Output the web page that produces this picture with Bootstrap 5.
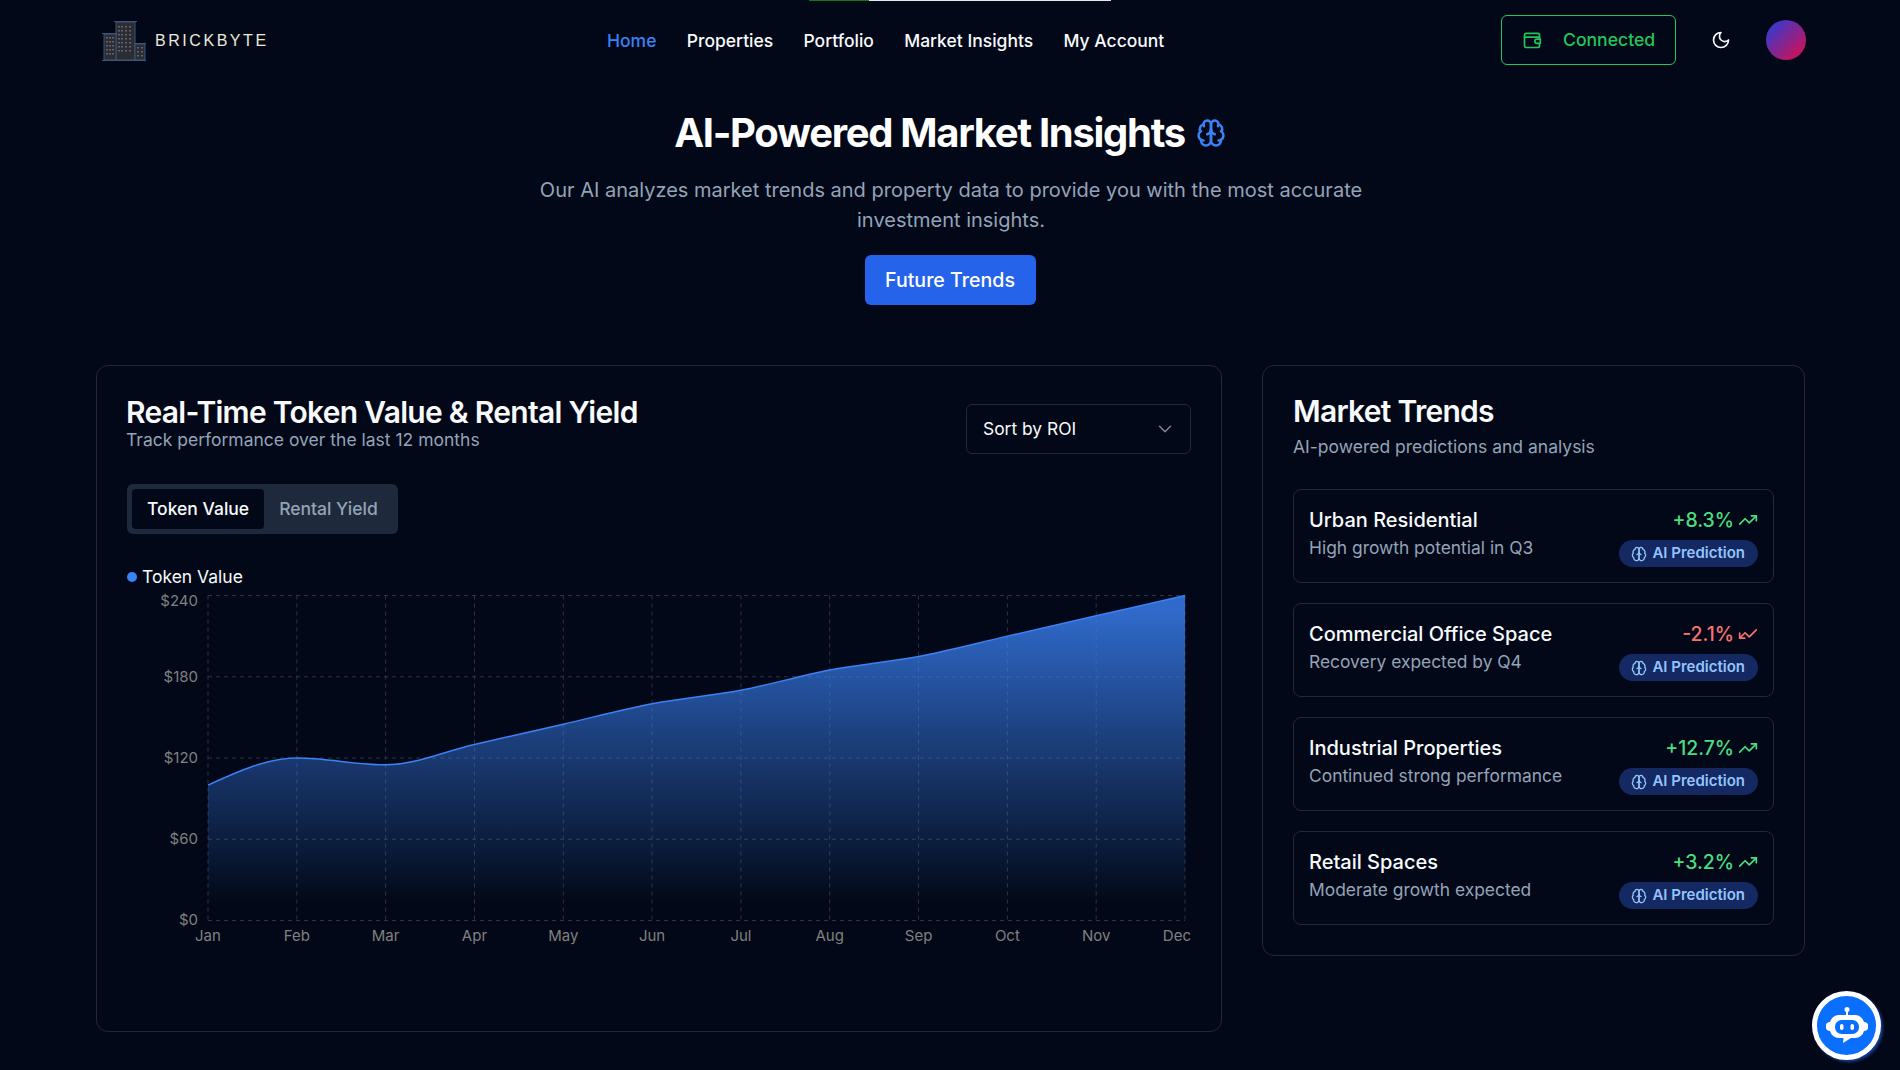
<!doctype html>
<html lang="en"><head><meta charset="utf-8"><title>BrickByte</title>
<link href="https://cdn.jsdelivr.net/npm/bootstrap@5.3.0/dist/css/bootstrap.min.css" rel="stylesheet">
<style>
body{background:#020817;color:#f8fafc;font-family:Inter,"Liberation Sans",sans-serif;min-height:1070px;overflow:hidden}
.topbar{height:1px;display:flex;justify-content:center;padding-left:19px}
.tb-g{width:60px;background:#0a7d12}.tb-w{width:242px;background:#e5e7eb}
.shell{padding:0 94px 0 96px}
.hdr{height:78px;display:flex;align-items:center}
.brand{display:flex;align-items:center;gap:9px;width:511px;padding-left:6px;margin-top:2px}
.brandname{font-family:"Liberation Sans",sans-serif;font-size:16px;letter-spacing:2.55px;color:#ece9dc}
.mainnav{gap:30.3px;margin-top:3px}
.mainnav a{color:#f8fafc;font-weight:500;font-size:17.5px;text-decoration:none}
.mainnav a.on{color:#3b82f6}
.rightbox{display:flex;align-items:center;margin-left:auto}
.conn{display:flex;align-items:center;gap:21px;height:50px;width:175px;padding-left:20px;border:1px solid #22c55e;border-radius:6px;color:#22c55e;font-weight:500;font-size:17.6px;background:transparent}
.moon{margin:0 35px 0 35px;line-height:0}
.avatar{width:40px;height:40px;border-radius:50%;background:linear-gradient(135deg,#1e40e0,#e60b45)}
.hero{text-align:center;padding-top:27px}
.hero h1{font-size:40px;font-weight:700;line-height:54px;margin:0 0 15px;letter-spacing:-1.3px;color:#fff;display:flex;justify-content:center;align-items:center;gap:11px;padding-right:2px}
.hero p{font-size:20px;line-height:30px;color:#94a3b8;width:850px;margin:0 auto 20px}
.cta{background:#2563eb;border:0;color:#fff;font-size:19.6px;font-weight:500;height:50px;width:171px;border-radius:6px;padding:1px 0 0;margin-right:2px}
.cta:hover{background:#2563eb;color:#fff}
.split{display:flex;gap:40px;margin-top:60px;align-items:flex-start}
.panel{background:#020817;border:1px solid #1e293b;border-radius:12px}
.leftp{width:1126px;height:667px;padding:30px 30px 0 29px}
.rightp{width:543px;height:591px;padding:30px}
.ttl{font-size:30px;font-weight:600;line-height:36px;letter-spacing:-.72px;margin:-2px 0 0;color:#f8fafc}
.rightp .ttl{margin-top:-3px}
.sub{color:#94a3b8;font-size:17.5px;line-height:24px;margin-top:-2px}
.sub2{color:#94a3b8;font-size:17.5px;line-height:24px;margin-top:6px}
.pick{width:225px;height:50px;margin-top:8px;background:#020817;border:1px solid #1e293b;border-radius:6px;color:#f8fafc;font-size:17.4px;padding:0 14px 0 16px;display:flex;align-items:center;justify-content:space-between}
.tabsbox{display:inline-flex;background:#1e293b;border-radius:6px;padding:5px;height:50px;margin:30px 0 0 1px}
.tabx{padding:0 15px;display:flex;align-items:center;font-size:17.5px;font-weight:500;color:#94a3b8;border-radius:4px}
.tabx.on{background:#020817;color:#f8fafc}
.legend{display:flex;align-items:center;gap:5px;font-size:17.5px;color:#f8fafc;line-height:24px;margin:31px 0 0 1px;height:24px}
.ldot{width:10px;height:10px;border-radius:50%;background:#3b82f6;margin-top:-1px}
.chartsvg{display:block;margin:-4px 0 0 -29px}
.chartsvg text{font-family:Inter,"Liberation Sans",sans-serif;font-size:15px;fill:#808080}
.rows{display:flex;flex-direction:column;gap:20px;margin-top:30px}
.trow{height:94px;border:1px solid #1e293b;border-radius:8px;padding:17px 16px 15px 15px;display:flex;justify-content:space-between}
.rname{font-size:20px;font-weight:500;line-height:28px;margin-top:-1px}
.rdesc{font-size:17.4px;line-height:24px;color:#94a3b8;margin-top:2px}
.rval{display:flex;align-items:center;justify-content:flex-end;gap:4px;font-size:19.4px;font-weight:500;line-height:28px;margin:-1px -1px 0 0}
.up{color:#4ade80}.down{color:#f87171}
.aitag{display:inline-flex;align-items:center;gap:5px;height:27px;padding:0 13px 0 12px;margin:6px -1px 0 0;border-radius:14px;color:#93c5fd;font-size:15px;font-weight:600;background:rgba(30,58,138,.65)}
.botbtn{position:absolute;right:19px;bottom:10px;width:69px;height:69px;border-radius:50%;background:#0b6ffd;border:5px solid #fff;display:flex;align-items:center;justify-content:center;box-shadow:2px 2px 3px rgba(37,99,235,.6)}
</style></head>
<body>
<div class="topbar"><div class="tb-g"></div><div class="tb-w"></div></div>
<div class="shell">
<header class="hdr">
 <div class="brand">
  <svg width="44" height="40" viewBox="0 0 44 40" fill="#2b2d33" stroke="#3d5578" stroke-width="1"><rect x="14" y="1" width="19" height="38"/><rect x="2" y="13" width="12" height="26"/><rect x="33" y="23" width="10" height="16"/><path d="M12 .5h23M0 12.5h15M32 22.500h12M0 39.500h44" fill="none"/><path d="M17 5v26M20 5v26M24 5v26M28 5v26M5 16v20M8 16v20M11 16v20M36 26v10M40 26v10" stroke="#778" stroke-width="1.500" stroke-dasharray="1.500 2.500" fill="none"/></svg>
  <span class="brandname">BRICKBYTE</span>
 </div>
 <nav class="d-flex mainnav">
  <a class="on" href="#">Home</a><a href="#">Properties</a><a href="#">Portfolio</a><a href="#">Market Insights</a><a href="#">My Account</a>
 </nav>
 <div class="rightbox">
  <button class="conn"><svg width="20" height="20" viewBox="0 0 24 24" fill="none" stroke="currentColor" stroke-width="2" stroke-linecap="round" stroke-linejoin="round"><path d="M21 11V6a2 2 0 0 0-2-2H5a2 2 0 0 0-2 2v13a2 2 0 0 0 2 2h14a2 2 0 0 0 2-2v-3"/><path d="M3 8.500h18"/><path d="M22 11h-4a2.500 2.500 0 0 0 0 5h4Z"/></svg><span>Connected</span></button>
  <span class="moon"><svg width="20" height="20" viewBox="0 0 24 24" fill="none" stroke="#f8fafc" stroke-width="2" stroke-linecap="round" stroke-linejoin="round"><path d="M12 3a6 6 0 0 0 9 9 9 9 0 1 1-9-9Z"/></svg></span>
  <span class="avatar"></span>
 </div>
</header>
<section class="hero">
 <h1>AI-Powered Market Insights <svg width="30" height="30" viewBox="0 0 24 24" fill="none" stroke="#3b82f6" stroke-width="2" stroke-linecap="round" stroke-linejoin="round"><path d="M12 5a3 3 0 1 0-5.997.125 4 4 0 0 0-2.526 5.770 4 4 0 0 0 .556 6.588A4 4 0 1 0 12 18Z"/><path d="M12 5a3 3 0 1 1 5.997.125 4 4 0 0 1 2.526 5.770 4 4 0 0 1-.556 6.588A4 4 0 1 1 12 18Z"/><path d="M15 13a4.500 4.500 0 0 1-3-4 4.500 4.500 0 0 1-3 4"/><path d="M17.599 6.500a3 3 0 0 0 .399-1.375"/><path d="M6.003 5.125A3 3 0 0 0 6.401 6.500"/><path d="M3.477 10.896a4 4 0 0 1 .585-.396"/><path d="M19.938 10.500a4 4 0 0 1 .585.396"/><path d="M6 18a4 4 0 0 1-1.967-.516"/><path d="M19.967 17.484A4 4 0 0 1 18 18"/></svg></h1>
 <p>Our AI analyzes market trends and property data to provide you with the most accurate investment insights.</p>
 <button class="btn cta">Future Trends</button>
</section>
<section class="split">
 <div class="panel leftp">
  <div class="d-flex justify-content-between">
   <div><h2 class="ttl">Real-Time Token Value &amp; Rental Yield</h2><div class="sub">Track performance over the last 12 months</div></div>
   <div class="pick"><span>Sort by ROI</span><svg width="22" height="22" viewBox="0 0 24 24" fill="none" stroke="#808590" stroke-width="1.600" stroke-linecap="round" stroke-linejoin="round"><path d="m6 9 6 6 6-6"/></svg></div>
  </div>
  <div class="tabsbox"><div class="tabx on">Token Value</div><div class="tabx">Rental Yield</div></div>
  <div class="legend"><span class="ldot"></span>Token Value</div>
  <svg id="chart" class="chartsvg" width="1124" height="370" viewBox="97 584.500 1124 370" xmlns="http://www.w3.org/2000/svg"></svg>
 </div>
 <div class="panel rightp">
  <h2 class="ttl">Market Trends</h2>
  <div class="sub2">AI-powered predictions and analysis</div>
  <div class="rows" id="rows"></div>
 </div>
</section>
</div>
<div class="botbtn"><svg width="42" height="40" viewBox="0 0 42 40"><circle cx="21" cy="3.500" r="2.500" fill="#fff"/><path d="M21 5v5" stroke="#fff" stroke-width="2"/><path d="M13 9h16a9 9 0 0 1 9 7 4 4 0 0 1 0 9 9 9 0 0 1-9 7h-4l-8 5 .5-5H13a9 9 0 0 1-9-7 4 4 0 0 1 0-9 9 9 0 0 1 9-7Z" fill="#fff"/><rect x="9" y="14" width="24" height="14" rx="6.500" fill="#0b6ffd"/><rect x="14" y="18" width="3.500" height="6" rx="1.700" fill="#fff"/><rect x="24.500" y="18" width="3.500" height="6" rx="1.700" fill="#fff"/></svg></div>
<script>
var vals=[100,120,115,130,145,160,170,185,195,210,225,240],mon=['Jan','Feb','Mar','Apr','May','Jun','Jul','Aug','Sep','Oct','Nov','Dec'];
var X=function(i){return 208+i*88.82},Y=function(v){return 920-v*325/240};
var px=vals.map(function(v,i){return [X(i),Y(v)]});
function monotone(p){var n=p.length,h=[],s=[],t=[],i;for(i=0;i<n-1;i++){h[i]=p[i+1][0]-p[i][0];s[i]=(p[i+1][1]-p[i][1])/h[i]}
 for(i=1;i<n-1;i++){var a=s[i-1],b=s[i];var q=(a*h[i]+b*h[i-1])/(h[i-1]+h[i]);t[i]=(Math.sign(a)+Math.sign(b))*Math.min(Math.abs(a),Math.abs(b),.5*Math.abs(q))||0}
 t[0]=(3*s[0]-t[1])/2;t[n-1]=(3*s[n-2]-t[n-2])/2;
 var d='M'+p[0][0]+','+p[0][1];for(i=0;i<n-1;i++){var k=h[i]/3;d+='C'+(p[i][0]+k)+','+(p[i][1]+k*t[i])+' '+(p[i+1][0]-k)+','+(p[i+1][1]-k*t[i+1])+' '+p[i+1][0]+','+p[i+1][1]}return d}
var line=monotone(px),o='<defs><linearGradient id="gr" x1="0" y1="0" x2="0" y2="1"><stop offset="5%" stop-color="#3b82f6" stop-opacity=".8"/><stop offset="95%" stop-color="#3b82f6" stop-opacity="0"/></linearGradient></defs>';
var g='';[0,60,120,180,240].forEach(function(v){g+='<line x1="208" x2="1185" y1="'+Y(v)+'" y2="'+Y(v)+'"/>'});
mon.forEach(function(m,i){g+='<line y1="595" y2="920" x1="'+X(i)+'" x2="'+X(i)+'"/>'});
o+='<g stroke="#2b3547" stroke-dasharray="4 4" fill="none">'+g+'</g>';
o+='<path d="'+line+'L1185,920L208,920Z" fill="url(#gr)"/><path d="'+line+'" fill="none" stroke="#3b82f6" stroke-width="1.500"/>';
[0,60,120,180,240].forEach(function(v){var dy=v==240?10:(v==0?4:5);o+='<text text-anchor="end" x="198" y="'+(Y(v)+dy)+'">$'+v+'</text>'});
mon.forEach(function(m,i){o+='<text text-anchor="'+(i==11?'end':'middle')+'" x="'+(i==11?1191:X(i))+'" y="940">'+m+'</text>'});
document.getElementById('chart').innerHTML=o;
var dn2='<path d="m22 7-8.500 8.500-5-5L2 17"/><path d="M8 17H2v-6"/>',up2='<path d="m2 17 6.500-6.500 5 5L22 7"/><path d="M16 7h6v6"/>';
var brain='<svg width="16" height="16" viewBox="0 0 24 24" fill="none" stroke="currentColor" stroke-width="2" stroke-linecap="round" stroke-linejoin="round"><path d="M12 5a3 3 0 1 0-5.997.125 4 4 0 0 0-2.526 5.770 4 4 0 0 0 .556 6.588A4 4 0 1 0 12 18Z"/><path d="M12 5a3 3 0 1 1 5.997.125 4 4 0 0 1 2.526 5.770 4 4 0 0 1-.556 6.588A4 4 0 1 1 12 18Z"/><path d="M15 13a4.500 4.500 0 0 1-3-4 4.500 4.500 0 0 1-3 4"/></svg>';
var rows=[['Urban Residential','High growth potential in Q3','+8.3%',1],['Commercial Office Space','Recovery expected by Q4','-2.1%',0],['Industrial Properties','Continued strong performance','+12.7%',1],['Retail Spaces','Moderate growth expected','+3.2%',1]];
document.getElementById('rows').innerHTML=rows.map(function(r){return '<div class="trow"><div><div class="rname">'+r[0]+'</div><div class="rdesc">'+r[1]+'</div></div><div class="text-end"><div class="rval '+(r[3]?'up':'down')+'">'+r[2]+'<svg width="20" height="20" viewBox="0 0 24 24" fill="none" stroke="currentColor" stroke-width="2" stroke-linecap="round" stroke-linejoin="round">'+(r[3]?up2:dn2)+'</svg></div><span class="aitag">'+brain+'AI Prediction</span></div></div>'}).join('');
</script>
</body></html>
